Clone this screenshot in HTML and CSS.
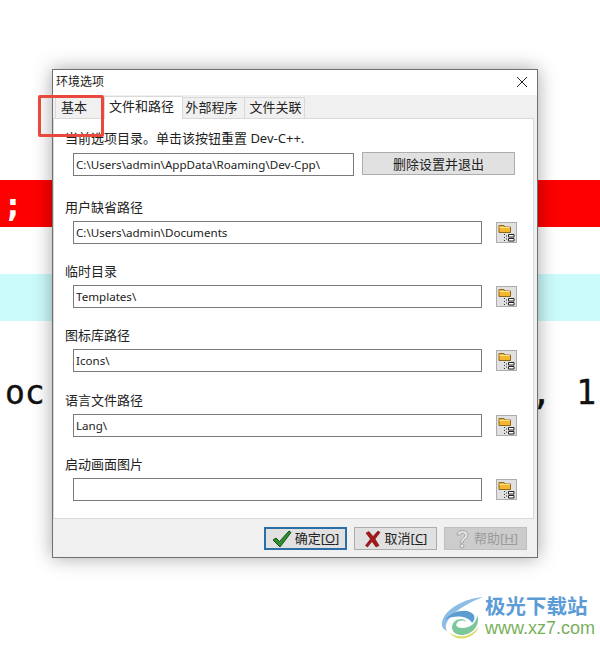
FILE: index.html
```html
<!DOCTYPE html>
<html lang="en">
<head>
  <meta charset="UTF-8" />
  <title>环境选项</title>
  <link rel="stylesheet" href="styles.css">
</head>
<body>

<svg width="0" height="0" class="defs">
  <symbol id="folder" viewBox="0 0 21 21">
    <path d="M3 3.500h5l1 1.500h5.500v5.500H3z" fill="#f5b52e" stroke="#8a6a1c" stroke-width="1"/>
    <path d="M3.500 5.500h10.500" stroke="#fde08a"/>
    <path d="M8 12.500h1M8 15.500h1M8 18.500h1M10 14h1M10 17h1" stroke="#333"/>
    <path d="M12.500 12.500h5.500v2.500h-5.500zM12.500 16.500h5.500v2.500h-5.500z" fill="#fff" stroke="#222"/>
  </symbol>
</svg>

<!-- page behind the dialog -->
<div class="backdrop">
  <div class="band band-red"><span class="semi">;</span></div>
  <div class="band band-cyan"></div>
  <div class="code-line"><span>oc</span><span class="code-end">, 1</span></div>
</div>

<div class="dialog">
  <div class="titlebar">
    <span>环境选项</span>
    <svg class="close" width="12" height="12" viewBox="0 0 12 12"><path d="M1 1l10 10M11 1L1 11" stroke="#222" stroke-width="1"/></svg>
  </div>

  <div class="tabs">
    <div class="tab tab-first">基本</div>
    <div class="tab active">文件和路径</div>
    <div class="tab tab-ext">外部程序</div>
    <div class="tab tab-assoc">文件关联</div>
  </div>

  <div class="panel">
    <div class="field field-first">
      <label>当前选项目录。单击该按钮重置 Dev-C++.</label>
      <div class="field-row">
        <input class="text-input input-short" type="text" value="C:\Users\admin\AppData\Roaming\Dev-Cpp\">
        <button class="reset-btn">删除设置并退出</button>
      </div>
    </div>

    <div class="field field-second">
      <label>用户缺省路径</label>
      <div class="field-row">
        <input class="text-input" type="text" value="C:\Users\admin\Documents">
        <button class="browse"><svg width="21" height="21"><use href="#folder"/></svg></button>
      </div>
    </div>

    <div class="field">
      <label>临时目录</label>
      <div class="field-row">
        <input class="text-input" type="text" value="Templates\">
        <button class="browse"><svg width="21" height="21"><use href="#folder"/></svg></button>
      </div>
    </div>

    <div class="field">
      <label>图标库路径</label>
      <div class="field-row">
        <input class="text-input" type="text" value="Icons\">
        <button class="browse"><svg width="21" height="21"><use href="#folder"/></svg></button>
      </div>
    </div>

    <div class="field field-lang">
      <label>语言文件路径</label>
      <div class="field-row">
        <input class="text-input" type="text" value="Lang\">
        <button class="browse"><svg width="21" height="21"><use href="#folder"/></svg></button>
      </div>
    </div>

    <div class="field">
      <label>启动画面图片</label>
      <div class="field-row">
        <input class="text-input" type="text" value="">
        <button class="browse"><svg width="21" height="21"><use href="#folder"/></svg></button>
      </div>
    </div>
  </div>

  <div class="footer">
    <button class="btn btn-default">
      <svg width="20" height="18" viewBox="0 0 20 18"><path d="M1 10l3-2 3.500 3.500L17 1l2 1.500L8 17z" fill="#2f8f2f" stroke="#14501a" stroke-width="1"/></svg>
      <span>确定[<u>O</u>]</span>
    </button>
    <button class="btn">
      <svg width="18" height="18" viewBox="0 0 18 18"><path d="M2 3l3-1.500 4 5 5-5.500 2 1.500-5 6.500 4 6.500-3 1.500-4-5.500-4.500 5.500-2-1.500 5-6.500z" fill="#a81818" stroke="#6e0f0f" stroke-width=".6"/></svg>
      <span>取消[<u>C</u>]</span>
    </button>
    <button class="btn btn-disabled">
      <svg width="18" height="20" viewBox="0 0 18 20"><path d="M4 6c0-6 11-6 11 0 0 4-5 4-5 8H7.500c0-5 4.500-5 4.500-8 0-2.500-5-2.500-5 0z" fill="#e8e8e8" stroke="#a5a5a5"/><circle cx="9" cy="17" r="2" fill="#e8e8e8" stroke="#a5a5a5"/></svg>
      <span>帮助[<u>H</u>]</span>
    </button>
  </div>
</div>

<!-- red annotation over the first tab -->
<div class="marker"></div>

<div class="watermark">
  <svg class="wm-logo" width="46" height="46" viewBox="0 0 46 46">
    <path d="M44 2C30 3 12 10 5 22c-4 7-2 12 3 14C3 28 14 14 44 2z" fill="#8dbde4"/>
    <path d="M6 25c6-8 18-11 25-8 5 2 6 7 2 11-3-7-17-9-27-3z" fill="#5d9ccf"/>
    <path d="M15 27c4-4 11-4 12 0-3-2-7-2-9 1-2 2 0 5 5 5 9 0 15-6 15-13 4 10-5 21-17 20-8-1-10-8-6-13z" fill="#7cc69b"/>
    <path d="M10 37c8 7 22 6 30-6-3 12-22 18-30 6z" fill="#dcdc6c"/>
  </svg>
  <div class="wm-text">
    <div class="wm-name">极光下载站</div>
    <div class="wm-url">www.xz7.com</div>
  </div>
</div>

</body>
</html>
```

FILE: styles.css
```css
* { margin: 0; padding: 0; box-sizing: border-box; }

body {
  position: relative;
  width: 600px;
  height: 645px;
  overflow: hidden;
  background: #fff;
  font-family: "Noto Sans", "Noto Sans CJK SC", sans-serif;
  font-size: 13px;
  color: #222;
}

.defs {
  position: absolute;
}

/* backdrop */
.backdrop {
  padding-top: 180px;
}

.band {
  height: 47px;
  margin-bottom: 47px;
}

.band-red {
  background: #fe0000;
  color: #fff;
  font: bold 33px/50px "DejaVu Sans Mono", monospace;
  padding-left: 3px;
}

.band-cyan {
  background: #ccfbfb;
}

.code-line {
  display: flex;
  justify-content: space-between;
  margin: 50px 4px 0 5px;
  font: 33px/44px "DejaVu Sans Mono", monospace;
  color: #111;
  white-space: pre;
  -webkit-text-stroke: 0.4px #111;
}

.code-end {
  word-spacing: 5px;
}

/* dialog */
.dialog {
  position: absolute;
  left: 52px;
  top: 69px;
  width: 486px;
  height: 489px;
  display: flex;
  flex-direction: column;
  background: #f0f0f0;
  border: 1px solid #707070;
  box-shadow: 0 0 18px rgba(0, 0, 0, 0.35);
}

.titlebar {
  height: 25px;
  flex: none;
  display: flex;
  align-items: center;
  justify-content: space-between;
  padding: 0 9px 4px 3px;
  background: #fff;
  font-size: 12px;
}

.close {
  margin-top: 3px;
}

.tabs {
  display: flex;
  align-items: flex-end;
  height: 23px;
  flex: none;
  padding-left: 2px;
}

.tab {
  height: 21px;
  width: 63px;
  line-height: 18px;
  text-align: center;
  background: #f0f0f0;
  border: 1px solid #d9d9d9;
  border-bottom: 0;
  margin-right: -1px;
}

.tab-first {
  width: 50px;
  text-align: left;
  padding-left: 5px;
}

.tab-ext {
  padding-right: 4px;
}

.tab-assoc {
  width: 61px;
  padding-left: 2px;
}

.tab.active {
  height: 23px;
  width: 79px;
  line-height: 18px;
  padding-right: 4px;
  background: #fff;
  position: relative;
  margin-bottom: -1px;
  z-index: 1;
}

.panel {
  height: 401px;
  flex: none;
  margin-right: 3px;
  background: #fff;
  border: 1px solid #d9d9d9;
  padding: 0 0 0 11px;
}

.field {
  margin-top: 18px;
  height: 46px;
}

.field-first {
  margin-top: 10px;
  height: 49px;
}

.field-first label {
  margin-bottom: 8px;
}

.field-second {
  margin-top: 20px;
}

.field-lang {
  margin-top: 19px;
}

.field label {
  display: block;
  height: 18px;
  line-height: 18px;
  margin-bottom: 5px;
  white-space: nowrap;
}

.field-row {
  display: flex;
  align-items: center;
  padding-left: 8px;
}

.text-input {
  width: 409px;
  height: 23px;
  border: 1px solid #7a7a7a;
  background: #fff;
  padding: 0 2px;
  font: 11.600px "Noto Sans", sans-serif;
  color: #222;
  outline: none;
}

.input-short {
  width: 281px;
}

.reset-btn {
  width: 153px;
  height: 23px;
  margin: 0 0 2px 8px;
  background: #e1e1e1;
  border: 1px solid #adadad;
  font: 13px "Noto Sans", "Noto Sans CJK SC", sans-serif;
  color: #222;
}

.browse {
  width: 21px;
  height: 21px;
  margin-left: 14px;
  background: #e1e1e1;
  border: 1px solid #adadad;
  display: block;
  line-height: 0;
}

.browse svg {
  margin: -1px;
}

.footer {
  flex: 1;
  display: flex;
  justify-content: flex-end;
  align-items: flex-start;
  gap: 7px;
  padding: 8px 10px 0 0;
}

.btn {
  width: 83px;
  height: 23px;
  display: flex;
  align-items: center;
  justify-content: center;
  gap: 3px;
  background: #e1e1e1;
  border: 1px solid #adadad;
  font: 13px "Noto Sans", "Noto Sans CJK SC", sans-serif;
  color: #222;
}

.btn span {
  padding-bottom: 3px;
}

.btn-default {
  border: 2px solid #2a6ea5;
}

.btn-disabled {
  background: #cccccc;
  border-color: #bfbfbf;
  color: #9a9a9a;
}

/* overlays */
.marker {
  position: absolute;
  left: 38px;
  top: 95px;
  width: 66px;
  height: 42px;
  border: 3px solid #e8493c;
  border-radius: 2px;
}

.watermark {
  position: absolute;
  left: 439px;
  top: 593px;
  display: flex;
  align-items: flex-start;
}

.wm-logo {
  margin-top: 2px;
}

.wm-name {
  font: bold 20.500px/24px "Noto Sans CJK SC", sans-serif;
  color: #5b9cd6;
}

.wm-url {
  font: 18px/20px "Liberation Sans", sans-serif;
  color: #78b05c;
  margin-top: 1px;
}
```
